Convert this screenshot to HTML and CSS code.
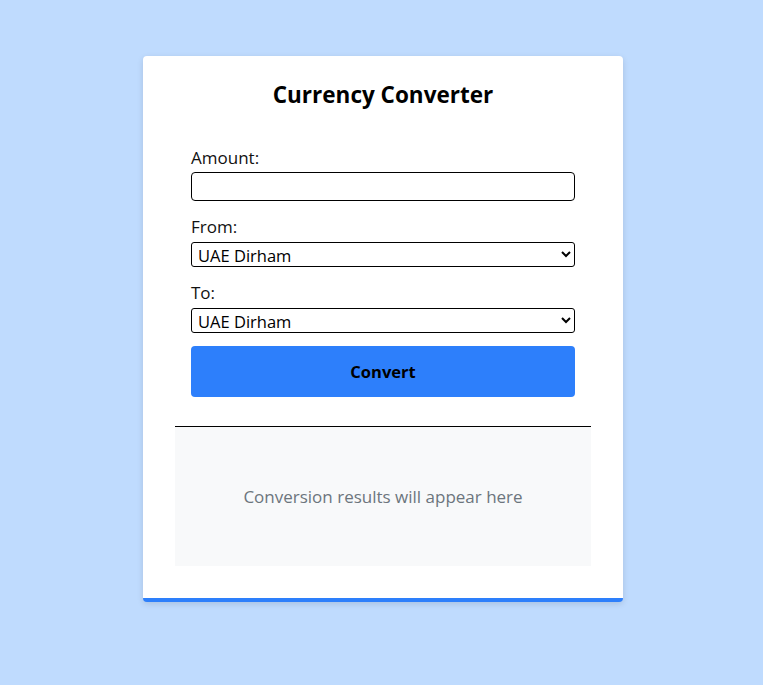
FILE: index.html
```html
<!DOCTYPE html>
<html>
<head>
<meta charset="utf-8">
<link rel="stylesheet" href="styles.css">
</head>
<body>
<div class="card">
  <h1 class="title">Currency Converter</h1>
  <form class="form">
    <label class="label" for="amount">Amount:</label>
    <input class="input" id="amount" type="text">
    <label class="label" for="from">From:</label>
    <select class="select" id="from"><option>UAE Dirham</option></select>
    <label class="label" for="to">To:</label>
    <select class="select" id="to"><option>UAE Dirham</option></select>
    <button class="btn" type="button">Convert</button>
  </form>
  <div class="result">Conversion results will appear here</div>
</div>
</body>
</html>
```
FILE: styles.css
```css
html, body { margin: 0; padding: 0; }
body {
  background: #bfdbfe;
  font-family: "Open Sans", "Noto Sans", sans-serif;
  min-height: 685px;
  padding-left: 3px;
}
.card {
  width: 480px;
  box-sizing: border-box;
  margin: 56px auto 0;
  background: #fff;
  border-radius: 4px;
  border-bottom: 4px solid #2d7ffb;
  padding: 23px 32px 32px;
  box-shadow: 0 2px 6px rgba(0,0,0,0.12);
}
.title {
  margin: 0;
  font-size: 22.5px;
  line-height: 32px;
  font-weight: 700;
  text-align: center;
  color: #000;
}
.form {
  display: flex;
  flex-direction: column;
  padding: 0 16px;
  margin-top: 37px;
}
.label {
  font-size: 17px;
  line-height: 20px;
  margin-bottom: 4px;
  color: #111;
}
.input {
  height: 29px;
  box-sizing: border-box;
  border: 1px solid #000;
  border-radius: 4px;
  margin: 0 0 16px;
  font-size: 16px;
}
.select {
  height: 25px;
  box-sizing: border-box;
  border: 1px solid #000;
  border-radius: 3px;
  margin: 1px 0 16px;
  font-family: inherit;
  font-size: 16.5px;
  background: #fff;
  color: #000;
  padding: 0 2px;
}
.select:last-of-type { margin-bottom: 13px; }
.btn {
  height: 51px;
  border: none;
  border-radius: 4px;
  background: #2d7ffb;
  color: #000;
  font-family: inherit;
  font-size: 16.5px;
  font-weight: 700;
}
.result {
  margin-top: 29px;
  border-top: 1px solid #000;
  background: #f8f9fa;
  height: 139px;
  display: flex;
  align-items: center;
  justify-content: center;
  color: #6c757d;
  font-size: 17px;
}
```
